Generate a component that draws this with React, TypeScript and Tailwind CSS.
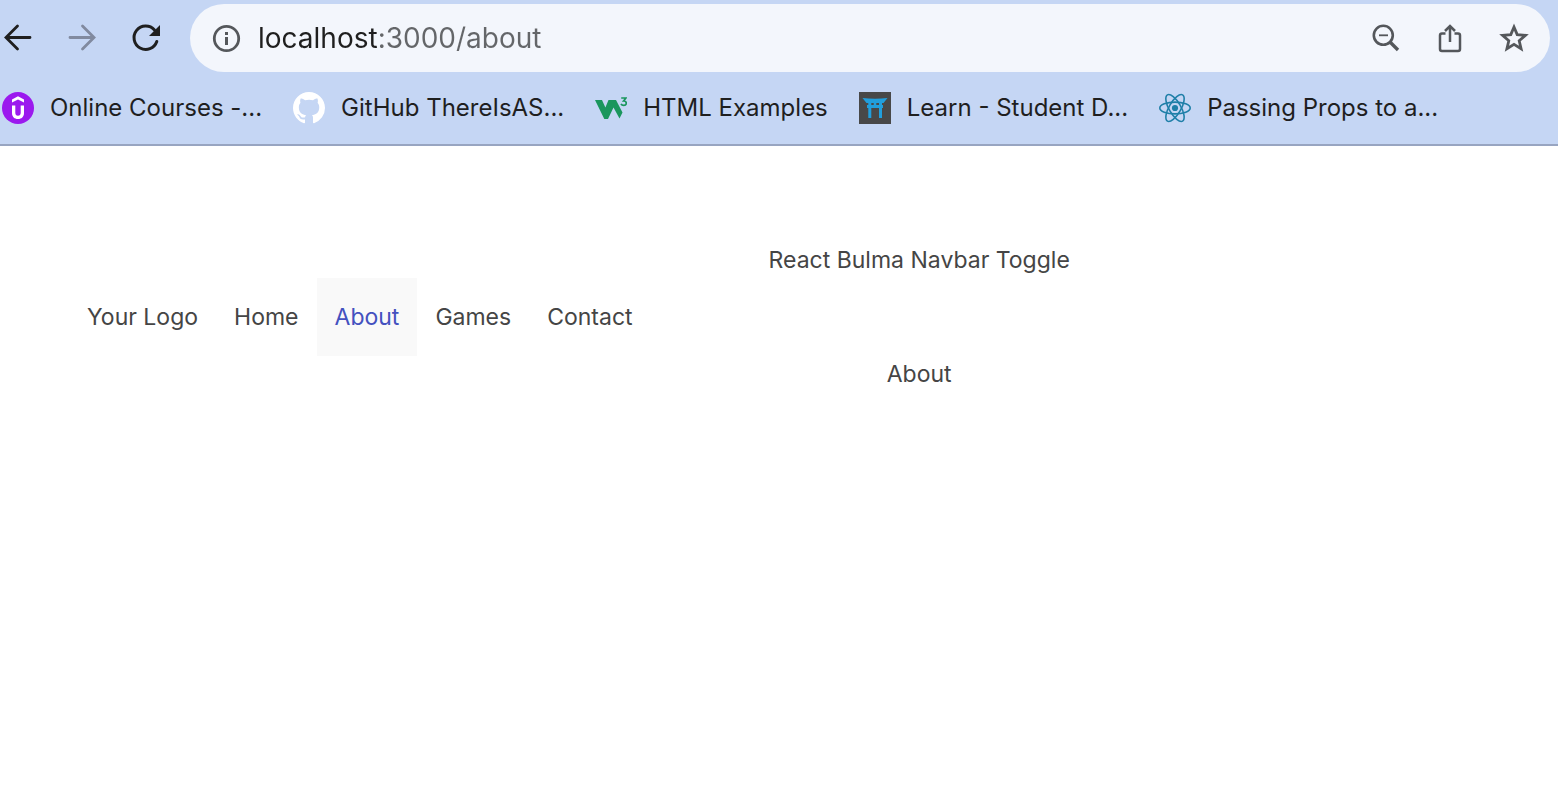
import type { ReactNode } from "react";
import { useState } from "react";

function UdemyIcon() {
  return (
    <svg viewBox="0 0 32 32" className="size-8 shrink-0" aria-hidden="true">
      <circle cx="16" cy="16" r="16" fill="#9b19ee" />
      <path d="M16 4.2 22 7.6v3L16 7.4l-6 3.2v-3z" fill="#fff" />
      <path d="M10 13.6h3.3v7.2c0 1.900 1 2.900 2.700 2.900s2.700-1 2.700-2.900v-7.200H22v7.400c0 3.900-2.500 6-6 6s-6-2.100-6-6z" fill="#fff" />
    </svg>
  );
}

function GitHubIcon() {
  return (
    <svg viewBox="0 0 16 16" className="size-8 shrink-0" aria-hidden="true">
      <path
        fill="#fff"
        d="M8 0C3.580 0 0 3.580 0 8c0 3.540 2.290 6.530 5.470 7.590.4.070.55-.17.55-.38 0-.19-.01-.82-.01-1.490-2.010.37-2.530-.49-2.690-.94-.09-.23-.48-.94-.82-1.130-.28-.15-.68-.52-.01-.53.63-.01 1.080.58 1.230.82.72 1.210 1.870.87 2.330.66.07-.52.28-.87.51-1.070-1.780-.2-3.640-.89-3.640-3.950 0-.87.31-1.590.82-2.150-.08-.2-.36-1.020.08-2.120 0 0 .67-.21 2.200.82.64-.18 1.320-.27 2-.27s1.360.09 2 .27c1.530-1.040 2.200-.82 2.200-.82.44 1.100.16 1.920.08 2.120.51.56.82 1.270.82 2.150 0 3.070-1.870 3.750-3.650 3.950.29.25.54.73.54 1.480 0 1.070-.01 1.930-.01 2.200 0 .21.15.46.55.38A8.010 8.010 0 0 0 16 8c0-4.420-3.580-8-8-8z"
      />
    </svg>
  );
}

function W3Icon() {
  return (
    <svg viewBox="0 0 32 32" className="size-8 shrink-0" aria-hidden="true">
      <path d="M0 8h7l3.400 7.500L13.500 8H21l6.500 12.600-3 5.900-6-11-5.500 11.500H9.300z" fill="#1a965d" />
      <path d="M26.200 6h4.800l-2.400 3c1.800 0 2.700.9 2.700 2.200s-1.100 2.200-2.600 2.200c-1.300 0-2.200-.5-2.700-1.500" fill="none" stroke="#1a965d" strokeWidth="1.700" />
    </svg>
  );
}

function ToriiIcon() {
  return (
    <svg viewBox="0 0 32 32" className="size-8 shrink-0" aria-hidden="true">
      <path d="M0 0h32v32H0z" fill="#484848" />
      <path d="M3.500 6q12.500 1.500 25 0l-4 5h-17z" fill="#219fdd" />
      <path d="M8 13h16v3H8zM9.300 10.500h3V26h-3zM20 10.500h3V26h-3zM14.700 10.500h2.600V13h-2.600z" fill="#219fdd" />
    </svg>
  );
}

function ReactIcon() {
  return (
    <svg viewBox="0 0 32 32" className="size-8 shrink-0" aria-hidden="true">
      <circle cx="16" cy="16" r="3.100" fill="#1f7fa8" />
      <g fill="none" stroke="#1f7fa8" strokeWidth="1.600">
        <ellipse cx="16" cy="16" rx="15.200" ry="5.900" />
        <ellipse cx="16" cy="16" rx="15.200" ry="5.900" transform="rotate(60 16 16)" />
        <ellipse cx="16" cy="16" rx="15.200" ry="5.900" transform="rotate(120 16 16)" />
      </g>
    </svg>
  );
}

function ToolButton({ label, color, children }: { label: string; color: string; children: ReactNode }) {
  return (
    <button type="button" aria-label={label} className={`size-9 shrink-0 ${color}`}>
      <svg viewBox="0 0 36 36" className="size-9" fill="none" stroke="currentColor" strokeWidth="2.800" aria-hidden="true">
        {children}
      </svg>
    </button>
  );
}

const bookmarks = [
  { label: "Online Courses -...", icon: <UdemyIcon /> },
  { label: "GitHub ThereIsAS...", icon: <GitHubIcon /> },
  { label: "HTML Examples", icon: <W3Icon /> },
  { label: "Learn - Student D...", icon: <ToriiIcon /> },
  { label: "Passing Props to a...", icon: <ReactIcon /> },
];

const links = ["Your Logo", "Home", "About", "Games", "Contact"];

export default function App() {
  const [url, setUrl] = useState("localhost:3000/about");
  return (
    <div className="min-h-screen bg-white font-['Inter',sans-serif] text-[23px] text-[#454545]">
      <header className="border-b-2 border-[#98a5c1] bg-[#c5d6f4]">
        <div className="flex items-center pt-1 pr-2">
          <div className="flex gap-7 pr-[26px]">
            <ToolButton label="Back" color="text-[#1f1f1f]">
              <path d="M30 17.500H7M17.500 6l-11.500 11.500 11.500 11.500" strokeLinecap="round" />
            </ToolButton>
            <ToolButton label="Forward" color="text-[#818a9f]">
              <path d="M6 17.500h23M18.500 6l11.500 11.500-11.500 11.500" strokeLinecap="round" />
            </ToolButton>
            <ToolButton label="Reload" color="text-[#1f1f1f]">
              <path d="M28.800 21.500A11.700 11.700 0 1 1 26.500 10" strokeWidth="3" strokeLinecap="round" />
              <path d="M32 5v11H21z" fill="currentColor" stroke="none" />
            </ToolButton>
          </div>
          <div className="flex h-[68px] min-w-0 flex-1 items-center rounded-full bg-[#f3f6fc] pr-[18px] pl-[18px]">
            <ToolButton label="Site information" color="text-[#54575b]">
              <circle cx="18.500" cy="18.500" r="12.200" />
              <path d="M18.500 17v8M18.500 12v3" strokeWidth="3" />
            </ToolButton>
            <input
              aria-label="Address"
              value={url}
              onChange={(e) => setUrl(e.target.value)}
              className="ml-[14px] h-10 min-w-0 flex-1 bg-[linear-gradient(to_right,#1f1f1f_120px,#646669_120px)] bg-clip-text text-[28px] text-transparent caret-black outline-none"
            />
            <div className="flex gap-7">
              <ToolButton label="Zoom" color="text-[#54575b]">
                <circle cx="15.300" cy="15.300" r="9.500" strokeWidth="2.600" />
                <path d="M11 15.300h9" strokeWidth="1.800" />
                <path d="m22 22 8 8" strokeWidth="3.300" />
              </ToolButton>
              <ToolButton label="Share" color="text-[#54575b]">
                <path d="M13.500 13.500H10a2 2 0 0 0-2 2V29a2 2 0 0 0 2 2h16a2 2 0 0 0 2-2V15.500a2 2 0 0 0-2-2h-3.500M18 22V6M13 11l5-5 5 5" strokeWidth="2.500" />
              </ToolButton>
              <ToolButton label="Bookmark this page" color="text-[#54575b]">
                <path d="m18 7 3.200 7.600 8.200.7-6.200 5.400 1.900 8-7.100-4.300-7.100 4.300 1.900-8-6.200-5.400 8.200-.7z" />
              </ToolButton>
            </div>
          </div>
        </div>
        <nav aria-label="Bookmarks" className="flex h-[72px] items-center gap-[31px] pl-[2px] text-2xl">
          {bookmarks.map((b) => (
            <a key={b.label} href="#" className="flex items-center gap-4 whitespace-nowrap text-[#1f1f1f]">
              {b.icon}
              {b.label}
            </a>
          ))}
        </nav>
      </header>
      <main className="flex items-center pt-24 pl-[69px]">
        <nav aria-label="Main" className="flex">
          {links.map((l) => (
            <a
              key={l}
              href="#"
              className={`flex h-[78px] items-center px-[18px] whitespace-nowrap ${l === "About" ? "bg-[#f9f9f9] text-[#4451bf]" : ""}`}
            >
              {l}
            </a>
          ))}
        </nav>
        <div className="ml-[118px] flex flex-col items-center gap-[78px] leading-9 whitespace-nowrap">
          <h1>React Bulma Navbar Toggle</h1>
          <p>About</p>
        </div>
      </main>
    </div>
  );
}
